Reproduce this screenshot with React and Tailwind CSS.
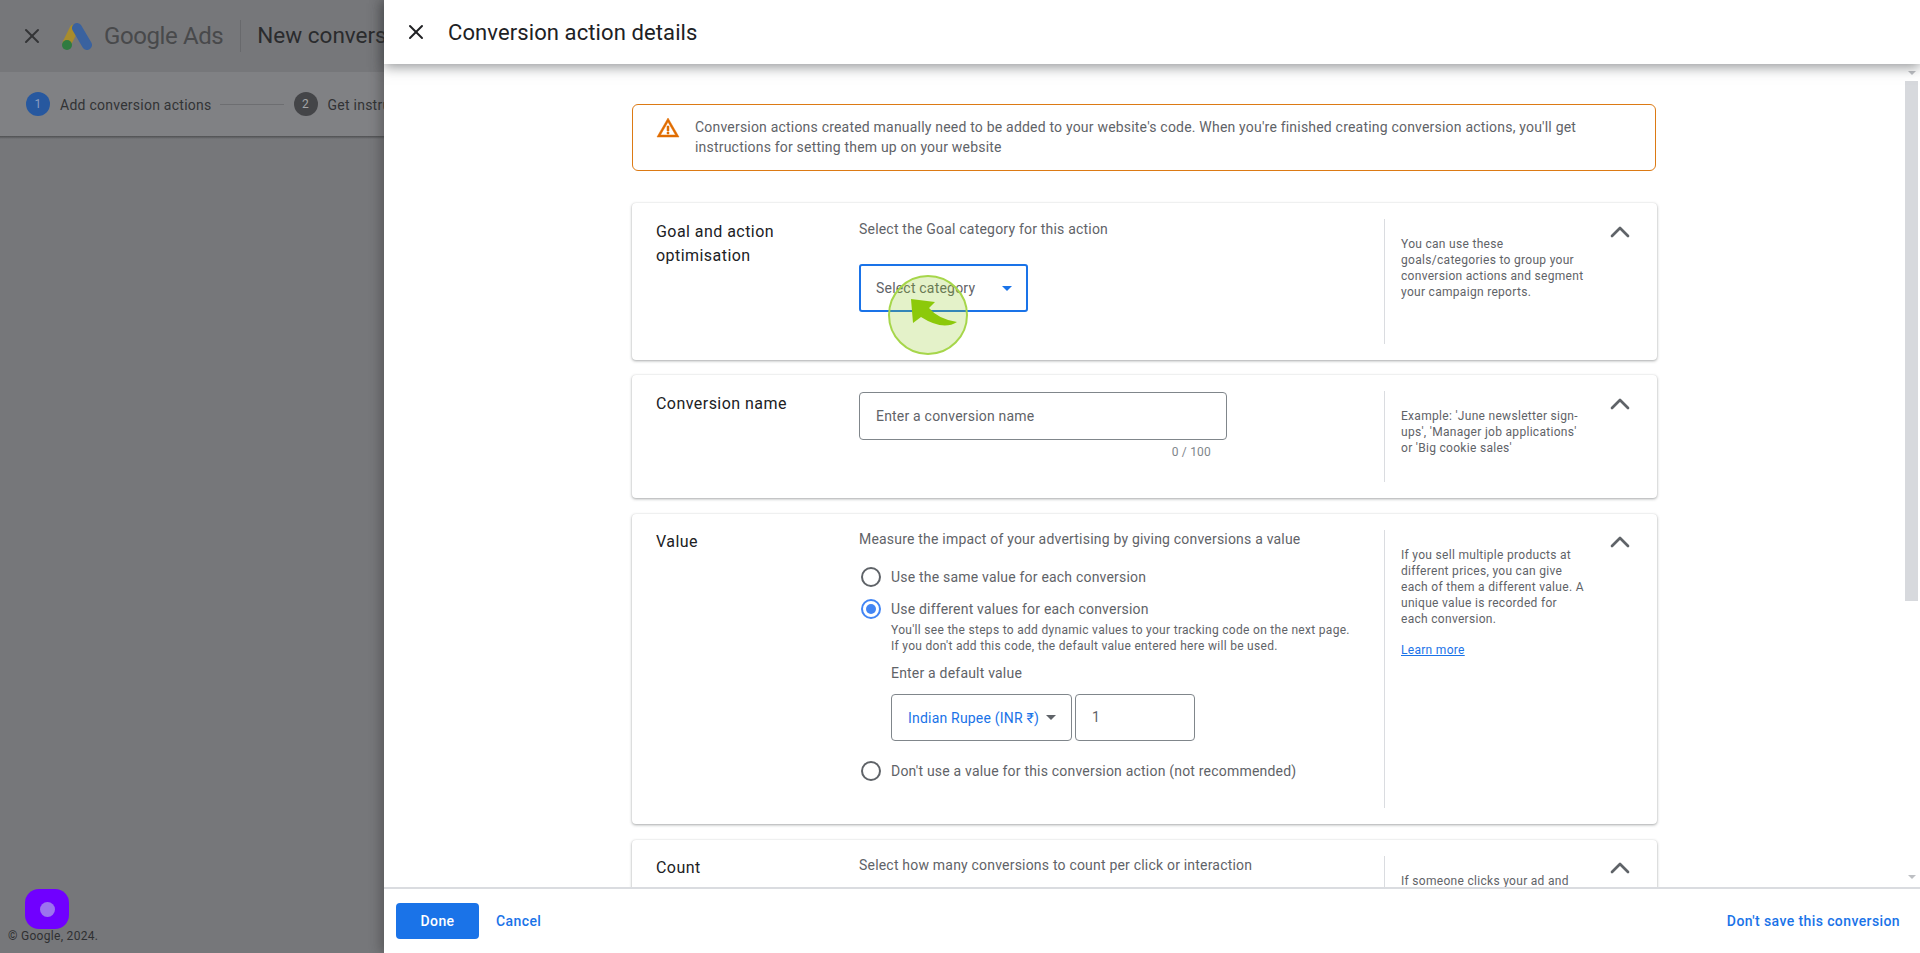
import { X, ChevronUp } from "lucide-react";

const font = "font-['Roboto',sans-serif]";

const Radio = ({ checked }) => (
    <span
        className={`flex size-5 shrink-0 items-center justify-center rounded-full border-2 ${
            checked ? "border-[#4285f4]" : "border-[#5f6368]"
        }`}
    >
        {checked && <span className="size-2.5 rounded-full bg-[#4285f4]" />}
    </span>
);

const Caret = ({ className }) => (
    <svg viewBox="0 0 10 5" className={className}>
        <path d="M0 0h10L5 5z" fill="currentColor" />
    </svg>
);

// One settings card: title, form column, help column, collapse chevron
const Card = ({ title, help, tight, className, children }) => (
    <section
        className={`flex rounded-[4px] bg-white pt-4 shadow-[0_1px_3px_rgba(60,64,67,0.45),0_0_1px_rgba(60,64,67,0.12)] ${className}`}
    >
        <h2
            className={`w-[227px] shrink-0 pl-6 pr-4 text-[16px] leading-6 tracking-[0.45px] text-[#202124] ${
                tight ? "" : "pt-[1px]"
            }`}
        >
            {title}
        </h2>
        <div className="w-[525px] shrink-0 text-[14px] tracking-[0.2px] text-[#5f6368]">{children}</div>
        <div className="mb-4 w-[202px] shrink-0 self-stretch border-l border-[#dadce0] pl-4 pt-[17px] text-[12px] leading-4 tracking-[0.3px] text-[#5f6368]">
            {help}
        </div>
        <div className="flex flex-1 justify-center pr-[3px]">
            <ChevronUp
                className={`size-8 text-[#5f6368] ${tight ? "-mt-[4px]" : "-mt-[3px]"}`}
                strokeWidth={2}
            />
        </div>
    </section>
);

const Background = () => (
    <div className="flex h-full flex-col bg-[#76777a]">
        {/* Top bar */}
        <header className="flex h-[72px] w-[384px] items-center overflow-hidden bg-[#76777a]">
            <X className="ml-[20px] size-6 shrink-0 text-[#333436]" strokeWidth={2} />
            <svg viewBox="0 0 30 27" className="ml-[18px] h-[27px] w-[30px] shrink-0">
                <path d="M12 6 L5 20" stroke="#a88c2c" strokeWidth="9" strokeLinecap="round" />
                <path d="M15 5 L25 22" stroke="#3a629f" strokeWidth="10" strokeLinecap="round" />
                <circle cx="5" cy="22" r="5" fill="#2f7b40" />
            </svg>
            <span className="ml-[12px] shrink-0 whitespace-nowrap text-[24px] tracking-[-0.4px] text-[#48494b]">Google Ads</span>
            <span className="ml-[17px] h-8 w-px shrink-0 bg-[#68696c]" />
            <span className="ml-[16px] whitespace-nowrap text-[22.5px] text-[#2a2b2d]">New conversion action</span>
        </header>

        {/* Stepper */}
        <div className="flex h-[64px] w-[384px] items-center overflow-hidden bg-[#808184] pl-[26px] text-[14px] tracking-[0.25px] text-[#323335]">
            <span className="flex size-6 shrink-0 items-center justify-center rounded-full bg-[#27589f] text-[12px] text-[#8b9dc0]">1</span>
            <span className="ml-[10px] shrink-0 whitespace-nowrap pt-[2px]">Add conversion actions</span>
            <span className="ml-2 h-px w-[64px] shrink-0 bg-[#6d6e71]" />
            <span className="ml-[10px] flex size-6 shrink-0 items-center justify-center rounded-full bg-[#444548] text-[12px] text-[#a4a5a7]">2</span>
            <span className="ml-[10px] whitespace-nowrap pt-[2px]">Get instructions</span>
        </div>
        <div className="h-[3px] bg-gradient-to-b from-[#4f5052] to-[#76777a]" />

        <div className="flex-1" />

        <p className="pb-[10px] pl-2 text-[12px] leading-[14px] tracking-[0.3px] text-[#2f3032]">© Google, 2024.</p>
    </div>
);

const Drawer = () => (
    <aside className="absolute inset-y-0 left-[384px] right-0 flex flex-col bg-white shadow-[-4px_0_10px_rgba(40,40,40,0.35)]">
        {/* Drawer header */}
        <header className="relative z-10 flex h-16 shrink-0 items-center bg-white shadow-[0_3px_12px_rgba(60,64,67,0.55)]">
            <X className="ml-5 size-6 text-[#202124]" strokeWidth={2} />
            <h1 className="ml-[20px] text-[22px] tracking-[0.1px] text-[#202124]">Conversion action details</h1>
        </header>

        {/* Scrolling body */}
        <div className="flex min-h-0 flex-1">
            <div className="min-h-0 flex-1 overflow-hidden pl-[248px] pt-10">
                <div className="flex h-[67px] w-[1024px] items-start rounded-[6px] border border-[#dc7a14] pl-[23px] pr-10 pt-3">
                    <svg viewBox="0 0 24 24" className="-mt-[1px] size-[24px] shrink-0 text-[#e06c00]" fill="currentColor" stroke="currentColor" strokeWidth="0.5">
                        <path d="M12 2 1 21h22L12 2zm0 4 7.53 13H4.47L12 6zm-1 4v5h2v-5h-2zm0 6v2h2v-2h-2z" />
                    </svg>
                    <p className="ml-[15px] text-[14px] leading-5 tracking-[0.2px] text-[#5f6368]">
                        Conversion actions created manually need to be added to your website's code. When you're finished creating conversion actions, you'll get instructions for setting them up on your website
                    </p>
                </div>

                <div className="mt-8 flex w-[1025px] flex-col gap-[15px]">
                    <Card
                        className="h-[157px]"
                        title="Goal and action optimisation"
                        help="You can use these goals/categories to group your conversion actions and segment your campaign reports."
                    >
                        <p className="leading-5">Select the Goal category for this action</p>
                        <div className="mt-[25px] flex h-[48px] w-[169px] items-center justify-between rounded-[3px] border-2 border-[#1a73e8] pl-[15px] pr-[14px]">
                            <span>Select category</span>
                            <Caret className="h-[5px] w-[10px] text-[#1a73e8]" />
                        </div>
                    </Card>

                    <Card
                        className="h-[123px]"
                        title="Conversion name"
                        help="Example: 'June newsletter sign-ups', 'Manager job applications' or 'Big cookie sales'"
                    >
                        <div className="mt-[1px] flex h-[48px] w-[368px] items-center rounded-[4px] border border-[#80868b] pl-4">
                            Enter a conversion name
                        </div>
                        <p className="mt-[4px] w-[352px] text-right text-[12px] leading-4 text-[#80868b]">0 / 100</p>
                    </Card>

                    <Card
                        tight
                        className="mt-[1px] h-[310px]"
                        title="Value"
                        help={
                            <>
                                <p>If you sell multiple products at different prices, you can give each of them a different value. A unique value is recorded for each conversion.</p>
                                <p className="mt-[15px] text-[#1a73e8] underline">Learn more</p>
                            </>
                        }
                    >
                        <p className="-mt-[1px] leading-5">Measure the impact of your advertising by giving conversions a value</p>
                        <div className="mt-[18px] flex h-5 items-center gap-2 pl-[2px]">
                            <Radio />
                            <span className="pl-[2px]">Use the same value for each conversion</span>
                        </div>
                        <div className="mt-3 flex h-5 items-center gap-2 pl-[2px]">
                            <Radio checked />
                            <span className="pl-[2px]">Use different values for each conversion</span>
                        </div>
                        <div className="pl-8">
                            <p className="mt-[3px] text-[12px] leading-4 tracking-[0.3px]">
                                You'll see the steps to add dynamic values to your tracking code on the next page.
                                <br />
                                If you don't add this code, the default value entered here will be used.
                            </p>
                            <p className="mt-[9px] leading-5">Enter a default value</p>
                            <div className="mt-[11px] flex gap-[3px]">
                                <div className="flex h-[47px] w-[181px] items-center justify-between rounded-[4px] border border-[#80868b] pl-4 pr-[15px] text-[#1a73e8]">
                                    <span className="pt-[2px]">Indian Rupee (INR ₹)</span>
                                    <Caret className="h-[5px] w-[10px] text-[#5f6368]" />
                                </div>
                                <div className="flex h-[47px] w-[120px] items-center rounded-[4px] border border-[#80868b] pl-4">1</div>
                            </div>
                        </div>
                        <div className="mt-5 flex h-5 items-center gap-2 pl-[2px]">
                            <Radio />
                            <span className="pl-[2px]">Don't use a value for this conversion action (not recommended)</span>
                        </div>
                    </Card>

                    <Card
                        tight
                        className="mt-[1px] h-[200px]"
                        title="Count"
                        help="If someone clicks your ad and"
                    >
                        <p className="-mt-[1px] leading-5">Select how many conversions to count per click or interaction</p>
                    </Card>
                </div>
            </div>

            {/* Scrollbar */}
            <div className="flex w-[15px] shrink-0 flex-col items-center pr-[2px] pt-[7px]">
                <Caret className="h-1 w-2 text-[#bdbfc3]" />
                <div className="mt-[6px] h-[520px] w-[13px] bg-[#d7d9dd]" />
                <div className="flex-1" />
                <Caret className="mb-2 h-1 w-2 text-[#bdbfc3]" />
            </div>
        </div>

        {/* Footer */}
        <footer className="flex h-[66px] shrink-0 items-center border-t-2 border-[#dadce0] bg-white pl-3 pr-5 text-[14px] font-medium tracking-[0.4px]">
            <button className="h-[36px] w-[83px] rounded-[4px] bg-[#1a73e8] text-white">Done</button>
            <a className="ml-[17px] text-[#1a73e8]">Cancel</a>
            <a className="ml-auto text-[#1a73e8]">Don't save this conversion</a>
        </footer>
    </aside>
);

export default function App() {
    return (
        <div className={`relative h-[953px] w-full overflow-hidden ${font}`}>
            <Background />
            <Drawer />

            {/* Recorder button */}
            <div className="absolute left-[25px] top-[889px] flex h-10 w-11 items-center justify-center rounded-[14px] bg-[#7000ff]">
                <span className="h-[15px] w-[15px] rounded-full bg-[#9c74ee]" />
            </div>

            {/* Walkthrough pointer */}
            <div className="absolute left-[888px] top-[275px] size-20 rounded-full border-2 border-[#a6d64a] bg-[rgba(139,200,20,0.23)]" />
            <svg viewBox="0 0 60 40" className="absolute left-[905px] top-[292px] h-10 w-[60px]">
                <path
                    fill="#8cc90a"
                    d="M6 7 30 10 24 16Q33 27 52 30 38 39 16 25L8 31Z"
                />
            </svg>
        </div>
    );
}
